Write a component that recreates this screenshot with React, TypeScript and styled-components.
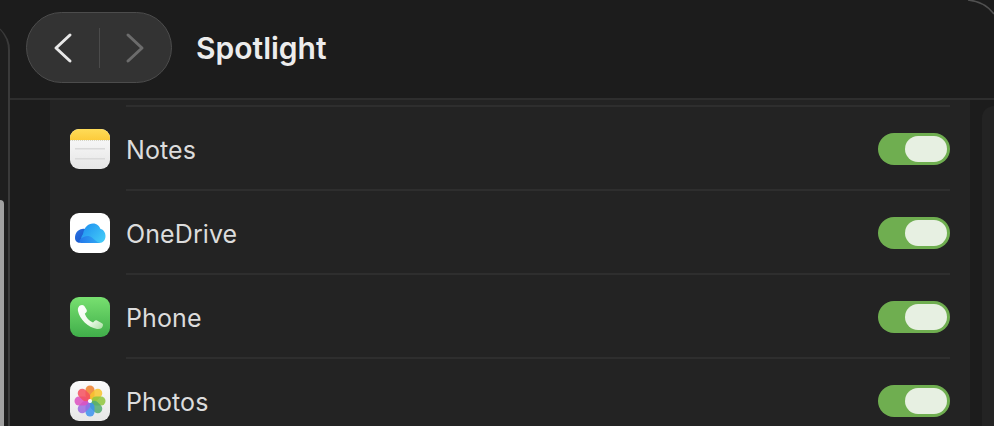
import React from "react";
import styled, { createGlobalStyle } from "styled-components";

const Global = createGlobalStyle`
  html, body { margin: 0; padding: 0; background: #1c1c1c; }
  body { width: 994px; height: 426px; overflow: hidden; font-family: Inter, "Liberation Sans", sans-serif; }
`;

const Screen = styled.div`
  position: relative;
  width: 994px;
  height: 426px;
  display: grid;
  grid-template-columns: 10px 1fr;
  background: #1c1c1c;
  overflow: hidden;
`;

const LeftEdge = styled.div`
  position: relative;
  margin: 22px 0 0 -20px;
  background: #1e1e1e;
  border-right: 2px solid #3a3a3a;
  border-top-right-radius: 28px;
`;

const WhiteSliver = styled.div`
  position: absolute;
  left: 20px;
  top: 178px;
  bottom: 0;
  width: 4px;
  background: #a0a0a0;
  border-top-right-radius: 5px;
`;

const Window = styled.div`
  background: #1c1c1c;
  display: flex;
  flex-direction: column;
  min-width: 0;
`;

const Header = styled.header`
  height: 100px;
  display: flex;
  align-items: center;
  padding: 0 0 3px 16px;
  gap: 24px;
  box-sizing: border-box;
  border-bottom: 2px solid #2e2e2e;
`;

const NavPill = styled.div`
  width: 146px;
  height: 71px;
  box-sizing: border-box;
  border: 1px solid #4c4c4c;
  border-radius: 36px;
  background: #333333;
  display: grid;
  grid-template-columns: 1fr 1px 1fr;
  align-items: center;
  justify-items: center;
`;

const NavDivider = styled.div`
  width: 1px;
  height: 40px;
  background: #4b4b4b;
`;

const Title = styled.h1`
  margin: 0;
  font-size: 30px;
  font-weight: 600;
  color: #ececec;
`;

const Body = styled.div`
  flex: 1;
  display: grid;
  grid-template-columns: 40px 920px 1fr;
  min-height: 0;
`;

const Card = styled.section`
  background: #232323;
  padding-top: 5px;
  position: relative;
`;

const TopRule = styled.div`
  height: 2px;
  margin: 0 20px 0 76px;
  background: #2e2e2e;
`;

const Row = styled.div`
  height: 84px;
  display: flex;
  align-items: center;
  padding: 0 20px;
  gap: 16px;
  position: relative;
  &:not(:last-child)::after {
    content: "";
    position: absolute;
    left: 76px;
    right: 20px;
    bottom: 0;
    height: 2px;
    background: #2e2e2e;
  }
`;

const IconBox = styled.div`
  width: 40px;
  height: 40px;
  flex: none;
  svg { display: block; }
`;

const Label = styled.span`
  flex: 1;
  padding-top: 2px;
  font-size: 25px;
  color: #dcdcdc;
  letter-spacing: 0.1px;
`;

const Toggle = styled.div`
  width: 72px;
  height: 32px;
  border-radius: 16px;
  background: #6fae50;
  display: flex;
  justify-content: flex-end;
  align-items: center;
  padding-right: 3px;
  box-sizing: border-box;
`;

const Knob = styled.div`
  width: 42px;
  height: 26px;
  border-radius: 13px;
  background: #e7f0e2;
`;

const RightPanel = styled.div`
  margin: 6px 0 0 12px;
  background: #232323;
  border-top-left-radius: 12px;
`;

const CornerArc = styled.svg`
  position: absolute;
  right: 0;
  top: 0;
`;

const Chevron = ({ dir, color }: { dir: "l" | "r"; color: string }) => (
  <svg width="24" height="32" viewBox="0 0 24 32" fill="none">
    <path
      d={dir === "l" ? "M19 3 L5 16 L19 29" : "M5 3 L19 16 L5 29"}
      stroke={color}
      strokeWidth="3"
      strokeLinecap="round"
      strokeLinejoin="round"
    />
  </svg>
);

const NotesIcon = () => (
  <svg width="40" height="40" viewBox="0 0 40 40">
    <defs>
      <linearGradient id="nb" x1="0" y1="0" x2="0" y2="1">
        <stop offset="0" stopColor="#fcfcfc" />
        <stop offset="1" stopColor="#e6e6e6" />
      </linearGradient>
      <linearGradient id="ny" x1="0" y1="0" x2="0" y2="1">
        <stop offset="0" stopColor="#fedc58" />
        <stop offset="1" stopColor="#fccb3c" />
      </linearGradient>
      <clipPath id="nc"><rect width="40" height="40" rx="9" /></clipPath>
    </defs>
    <g clipPath="url(#nc)">
      <rect width="40" height="40" fill="url(#nb)" />
      <rect width="40" height="11" fill="url(#ny)" />
      <line x1="0" y1="11.500" x2="40" y2="11.500" stroke="#d4d4c4" strokeWidth="1" strokeDasharray="1 1" />
      <rect x="5" y="19" width="30" height="1.500" fill="#dadada" />
      <rect x="5" y="29" width="30" height="1.500" fill="#dadada" />
    </g>
  </svg>
);

const OneDriveIcon = () => (
  <svg width="40" height="40" viewBox="0 0 40 40">
    <defs>
      <linearGradient id="o1" x1="0" y1="0" x2="1" y2="1">
        <stop offset="0" stopColor="#2a74e4" />
        <stop offset="1" stopColor="#1450c4" />
      </linearGradient>
      <linearGradient id="o2" x1="0" y1="0" x2="1" y2="0.700">
        <stop offset="0" stopColor="#1c8cf0" />
        <stop offset="1" stopColor="#42c8f7" />
      </linearGradient>
      <linearGradient id="o3" x1="0" y1="0" x2="1" y2="0">
        <stop offset="0" stopColor="#2478ea" />
        <stop offset="1" stopColor="#30aaf4" />
      </linearGradient>
    </defs>
    <rect width="40" height="40" rx="9" fill="#fff" />
    <path d="M5 25 C5 20 8 16.500 12 16 C15 15.500 17 16 19 18 L13 29 C9 31 5 29 5 25Z" fill="url(#o1)" />
    <path d="M12 30 C10 27 11 24 13 21 C14.500 14 18 10.500 23 10.500 C27 10.500 29.500 13 30.500 16 C33.500 16.500 35.500 19.500 35.500 23 C35.500 27 33 30 29.500 30Z" fill="url(#o2)" />
    <path d="M12 30 C9.500 30 8.500 27.500 11 25.500 C15 22.500 19 22 22.500 25 C25 27 27 29.500 30 30Z" fill="url(#o3)" />
  </svg>
);

const PhoneIcon = () => (
  <svg width="40" height="40" viewBox="0 0 40 40">
    <defs>
      <linearGradient id="pg" x1="0" y1="0" x2="0" y2="1">
        <stop offset="0" stopColor="#78e070" />
        <stop offset="1" stopColor="#40ae4a" />
      </linearGradient>
      <linearGradient id="ph" x1="0" y1="0" x2="1" y2="1">
        <stop offset="0" stopColor="#ffffff" />
        <stop offset="0.600" stopColor="#eefaea" />
        <stop offset="1" stopColor="#a8e0a2" />
      </linearGradient>
    </defs>
    <rect width="40" height="40" rx="9" fill="url(#pg)" />
    <path
      d="M12 8 C9 8 7.500 11 8 14 C9.500 22 18 30.500 27 32 C30.500 32.500 33 30.500 33 28 C33 27 32.500 26.500 31.500 26 L27 23.500 C26 23 25.200 23.200 24.500 24 L23 25.500 C19 24 16.200 20.500 14.800 16.800 L16.300 15.300 C17 14.500 17 13.500 16.500 12.500 L14.300 9 C13.700 8.300 12.800 8 12 8Z"
      fill="url(#ph)"
    />
  </svg>
);

const petals = [
  { a: 0, c: "#f0802c" },
  { a: 45, c: "#f8c42e" },
  { a: 90, c: "#8fc63c" },
  { a: 135, c: "#52ac70" },
  { a: 180, c: "#3c92ee" },
  { a: 225, c: "#9c68e0" },
  { a: 270, c: "#dc50c0" },
  { a: 315, c: "#f4505e" },
];

const PhotosIcon = () => (
  <svg width="40" height="40" viewBox="0 0 40 40">
    <defs>
      <linearGradient id="fg" x1="0" y1="0" x2="0" y2="1">
        <stop offset="0" stopColor="#fcfcfc" />
        <stop offset="1" stopColor="#e6e6e6" />
      </linearGradient>
    </defs>
    <rect width="40" height="40" rx="9" fill="url(#fg)" />
    {petals.map((p) => (
      <rect
        key={p.a}
        x="15.500"
        y="4.500"
        width="9"
        height="14"
        rx="4.500"
        fill={p.c}
        opacity="0.850"
        transform={`rotate(${p.a} 20 20)`}
      />
    ))}
    <circle cx="20" cy="20" r="2" fill="#fafafa" />
  </svg>
);

const apps = [
  { name: "Notes", Icon: NotesIcon },
  { name: "OneDrive", Icon: OneDriveIcon },
  { name: "Phone", Icon: PhoneIcon },
  { name: "Photos", Icon: PhotosIcon },
];

export default function App() {
  return (
    <Screen>
      <Global />
      <LeftEdge>
        <WhiteSliver />
      </LeftEdge>
      <Window>
        <Header>
          <NavPill>
            <Chevron dir="l" color="#e8e8e8" />
            <NavDivider />
            <Chevron dir="r" color="#6c6c6c" />
          </NavPill>
          <Title>Spotlight</Title>
        </Header>
        <Body>
          <div />
          <Card>
            <TopRule />
            {apps.map(({ name, Icon }) => (
              <Row key={name}>
                <IconBox><Icon /></IconBox>
                <Label>{name}</Label>
                <Toggle><Knob /></Toggle>
              </Row>
            ))}
          </Card>
          <RightPanel />
        </Body>
      </Window>
      <CornerArc width="28" height="16" viewBox="0 0 28 16" fill="none">
        <path d="M2 0 C13 1 22 6 28 14" stroke="#505050" strokeWidth="1.500" />
      </CornerArc>
    </Screen>
  );
}
